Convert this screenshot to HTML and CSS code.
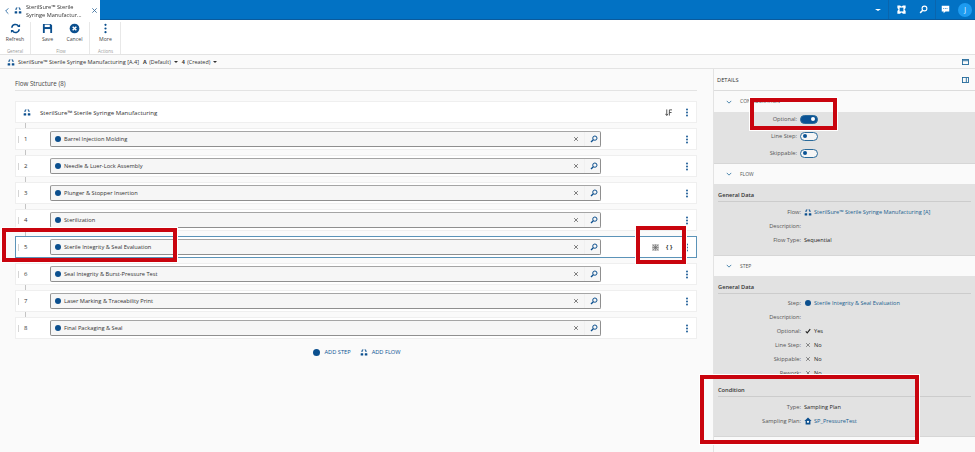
FILE: index.html
```html
<!DOCTYPE html>
<html lang="en">
<head>
<meta charset="utf-8">
<title>Flow</title>
<link rel="stylesheet" href="styles.css">
</head>
<body>
<svg class="defs" width="0" height="0">
  <symbol id="flow" viewBox="0 0 12 10"><path d="M3 4.4V3.2Q3 1 5 1M7 1Q9 1 9 3.2V4.4" fill="none" stroke="currentColor" stroke-width="1.6"/><rect x="1" y="6" width="3.8" height="3.6" rx=".5" fill="currentColor"/><rect x="7.2" y="6" width="3.8" height="3.6" rx=".5" fill="currentColor"/></symbol>
  <symbol id="search" viewBox="0 0 12 12"><circle cx="7.3" cy="4.7" r="3.2" fill="none" stroke="currentColor" stroke-width="1.5"/><path d="M5 7 1.5 10.5" stroke="currentColor" stroke-width="2"/></symbol>
  <symbol id="x" viewBox="0 0 8 8"><path d="M1.5 1.5 6.5 6.5M6.5 1.5 1.5 6.5" stroke="currentColor" stroke-width="1"/></symbol>
  <symbol id="chev" viewBox="0 0 8 5"><path d="M1 1 4 4 7 1" fill="none" stroke="currentColor" stroke-width="1"/></symbol>
  <symbol id="dots" viewBox="0 0 4 12"><circle cx="2" cy="2" r="1.2" fill="currentColor"/><circle cx="2" cy="6" r="1.2" fill="currentColor"/><circle cx="2" cy="10" r="1.2" fill="currentColor"/></symbol>
</svg>

<div class="page">
<header class="topbar">
  <div class="tab">
    <svg class="tab-back" viewBox="0 0 6 10"><path d="M5 1 1 5 5 9" fill="none" stroke="currentColor" stroke-width="1.2"/></svg>
    <svg class="ic-flow tab-flow"><use href="#flow"/></svg>
    <div class="tab-title">SterilSure™ Sterile<br>Syringe Manufactur...</div>
    <svg class="tab-close"><use href="#x"/></svg>
  </div>
  <div class="top-actions">
    <span class="caret white"></span>
    <span class="top-sep"></span>
    <svg class="top-ic t-expand" viewBox="0 0 12 12"><path d="M.5 .5H4L6 2 8 .5H11.5V4L10 6 11.5 8V11.5H8L6 10 4 11.5H.5V8L2 6 .5 4Z" fill="#fff"/><rect x="3.5" y="3.5" width="5" height="5" fill="#0272c4"/></svg>
    <svg class="top-ic t-search" viewBox="0 0 12 12"><use href="#search"/></svg>
    <span class="top-sep"></span>
    <svg class="top-ic t-chat" viewBox="0 0 12 12"><path d="M1 1H11V8.5H6L3.5 11V8.5H1Z" fill="#fff"/><path d="M3 4.7H9" stroke="#0272c4" stroke-dasharray="1.2 1"/></svg>
    <span class="avatar">J</span>
  </div>
</header>

<section class="ribbon">
  <div class="rgroup g1">
    <div class="rbtns"><div class="rbtn"><svg class="r-ic" viewBox="0 0 12 12"><path d="M2 5.2A4 4 0 0 1 9.3 3.4M10 6.8A4 4 0 0 1 2.7 8.6" fill="none" stroke="currentColor" stroke-width="1.7"/><path d="M7.8 4.4H11V1.2ZM4.2 7.6H1V10.8Z" fill="currentColor"/></svg><span>Refresh</span></div></div>
    <div class="rlabel">General</div>
  </div>
  <div class="rgroup g2">
    <div class="rbtns">
      <div class="rbtn"><svg class="r-ic" viewBox="0 0 12 12"><path d="M1 1H9.5L11 2.5V11H1Z" fill="currentColor"/><rect x="3" y="1.8" width="5.5" height="2.6" fill="#fff"/><rect x="3" y="6.6" width="6" height="4.4" fill="#fff"/></svg><span>Save</span></div>
      <div class="rbtn"><svg class="r-ic" viewBox="0 0 12 12"><circle cx="6" cy="6" r="5.3" fill="currentColor"/><path d="M4 4 8 8M8 4 4 8" stroke="#fff" stroke-width="1.6"/></svg><span>Cancel</span></div>
    </div>
    <div class="rlabel">Flow</div>
  </div>
  <div class="rgroup g3">
    <div class="rbtns"><div class="rbtn"><svg class="r-ic" viewBox="0 0 4 12"><use href="#dots"/></svg><span>More</span></div></div>
    <div class="rlabel">Actions</div>
  </div>
</section>

<nav class="crumb">
  <svg class="ic-flow"><use href="#flow"/></svg>
  <span class="crumb-name">SterilSure™ Sterile Syringe Manufacturing [A.4]</span>
  <span class="crumb-item"><b>A</b> (Default)<i class="caret"></i></span>
  <span class="crumb-item"><b>4</b> (Created)<i class="caret"></i></span>
  <svg class="panel-ic crumb-end" viewBox="0 0 8 7"><rect x=".5" y=".5" width="7" height="6" fill="none" stroke="currentColor"/><path d="M1 2H7" stroke="currentColor"/></svg>
</nav>

<main class="main">
  <section class="left">
    <h2 class="left-title">Flow Structure (8)</h2>
    <div class="rows">
      <div class="row head">
        <svg class="ic-flow head-ic"><use href="#flow"/></svg>
        <span class="head-name">SterilSure™ Sterile Syringe Manufacturing</span>
        <svg class="sort" viewBox="0 0 8 8"><path d="M2 .5V7M.5 5.5 2 7.5 3.5 5.5M5 1V7.5M5 1H8M5 4H7.5" fill="none" stroke="#444" stroke-width="1"/></svg>
        <svg class="dots"><use href="#dots"/></svg>
      </div>
      <div class="row"><span class="num">1</span><div class="field"><i class="dot"></i><span class="fname">Barrel Injection Molding</span><svg class="fx"><use href="#x"/></svg><span class="fsep"></span><svg class="fs"><use href="#search"/></svg></div><svg class="dots"><use href="#dots"/></svg></div>
      <div class="row"><span class="num">2</span><div class="field"><i class="dot"></i><span class="fname">Needle &amp; Luer-Lock Assembly</span><svg class="fx"><use href="#x"/></svg><span class="fsep"></span><svg class="fs"><use href="#search"/></svg></div><svg class="dots"><use href="#dots"/></svg></div>
      <div class="row"><span class="num">3</span><div class="field"><i class="dot"></i><span class="fname">Plunger &amp; Stopper Insertion</span><svg class="fx"><use href="#x"/></svg><span class="fsep"></span><svg class="fs"><use href="#search"/></svg></div><svg class="dots"><use href="#dots"/></svg></div>
      <div class="row"><span class="num">4</span><div class="field"><i class="dot"></i><span class="fname">Sterilization</span><svg class="fx"><use href="#x"/></svg><span class="fsep"></span><svg class="fs"><use href="#search"/></svg></div><svg class="dots"><use href="#dots"/></svg></div>
      <div class="row active"><span class="num">5</span><div class="field"><i class="dot"></i><span class="fname">Sterile Integrity &amp; Seal Evaluation</span><svg class="fx"><use href="#x"/></svg><span class="fsep"></span><svg class="fs"><use href="#search"/></svg></div>
        <svg class="cond" viewBox="0 0 7 7"><rect width="7" height="7" fill="#c9c9c9"/><path d="M1 1 6 6M6 1 1 6M3.5 .5V6.5M.5 3.5H6.5" stroke="#666" stroke-width=".6"/></svg><span class="braces">{ }</span><svg class="dots"><use href="#dots"/></svg></div>
      <div class="row"><span class="num">6</span><div class="field"><i class="dot"></i><span class="fname">Seal Integrity &amp; Burst-Pressure Test</span><svg class="fx"><use href="#x"/></svg><span class="fsep"></span><svg class="fs"><use href="#search"/></svg></div><svg class="dots"><use href="#dots"/></svg></div>
      <div class="row"><span class="num">7</span><div class="field"><i class="dot"></i><span class="fname">Laser Marking &amp; Traceability Print</span><svg class="fx"><use href="#x"/></svg><span class="fsep"></span><svg class="fs"><use href="#search"/></svg></div><svg class="dots"><use href="#dots"/></svg></div>
      <div class="row"><span class="num">8</span><div class="field"><i class="dot"></i><span class="fname">Final Packaging &amp; Seal</span><svg class="fx"><use href="#x"/></svg><span class="fsep"></span><svg class="fs"><use href="#search"/></svg></div><svg class="dots"><use href="#dots"/></svg></div>
    </div>
    <div class="adds">
      <span class="add"><i class="dot"></i>ADD STEP</span>
      <span class="add"><svg class="ic-flow"><use href="#flow"/></svg>ADD FLOW</span>
    </div>
  </section>

  <aside class="right">
    <div class="details"><span>DETAILS</span><svg class="panel-ic" viewBox="0 0 8 7"><rect x=".5" y=".5" width="7" height="6" fill="none" stroke="currentColor"/><path d="M5 1V6" stroke="currentColor"/></svg></div>
    <div class="sec-head h-config"><svg class="chev"><use href="#chev"/></svg>CONFIGURATION</div>
    <div class="sec config">
      <div class="kv"><span class="k kt">Optional:</span><span class="toggle on"></span></div>
      <div class="kv"><span class="k kt">Line Step:</span><span class="toggle"></span></div>
      <div class="kv"><span class="k kt">Skippable:</span><span class="toggle"></span></div>
    </div>
    <div class="sec-head"><svg class="chev"><use href="#chev"/></svg>FLOW</div>
    <div class="sec flow">
      <div class="sub">General Data</div>
      <div class="kv"><span class="k">Flow:</span><span class="v link"><svg class="ic-flow"><use href="#flow"/></svg>SterilSure™ Sterile Syringe Manufacturing [A]</span></div>
      <div class="kv"><span class="k">Description:</span></div>
      <div class="kv"><span class="k">Flow Type:</span><span class="v">Sequential</span></div>
    </div>
    <div class="sec-head"><svg class="chev"><use href="#chev"/></svg>STEP</div>
    <div class="sec step">
      <div class="sub">General Data</div>
      <div class="kv"><span class="k">Step:</span><span class="v link"><i class="dot"></i>Sterile Integrity &amp; Seal Evaluation</span></div>
      <div class="kv"><span class="k">Description:</span></div>
      <div class="kv"><span class="k">Optional:</span><span class="v"><svg class="yn" viewBox="0 0 8 8"><path d="M1 4.5 3 6.5 7 1.5" fill="none" stroke="#222" stroke-width="1.5"/></svg>Yes</span></div>
      <div class="kv"><span class="k">Line Step:</span><span class="v"><svg class="yn no"><use href="#x"/></svg>No</span></div>
      <div class="kv"><span class="k">Skippable:</span><span class="v"><svg class="yn no"><use href="#x"/></svg>No</span></div>
      <div class="kv"><span class="k">Rework:</span><span class="v"><svg class="yn no"><use href="#x"/></svg>No</span></div>
      <div class="sub sub2">Condition</div>
      <div class="kv"><span class="k">Type:</span><span class="v">Sampling Plan</span></div>
      <div class="kv"><span class="k">Sampling Plan:</span><span class="v link"><svg class="plan" viewBox="0 0 10 10"><path d="M5 .5 9.5 5H8V9.5H2V5H.5Z" fill="currentColor"/><circle cx="5" cy="6" r="1.4" fill="#fff"/></svg>SP_PressureTest</span></div>
    </div>
  </aside>
</main>
</div>

<div class="redbox rb-opt"></div>
<div class="redbox rb-step"></div>
<div class="redbox rb-cond"></div>
<div class="redbox rb-icons"></div>
</body>
</html>
```
FILE: styles.css
```css
* { box-sizing: border-box; }
html, body { margin: 0; padding: 0; }
body {
  width: 975px; height: 452px; overflow: hidden; position: relative;
  background: #fafafa; color: #333;
  font-family: "Open Sans", sans-serif; font-size: 5.7px; line-height: 9px;
}
.page { filter: blur(.3px); }
.defs { position: absolute; }
svg { display: block; flex: none; }
.topbar { height: 20px; background: #0272c4; border-bottom: 1px solid #0a5a9c; display: flex; justify-content: space-between; }
.tab { width: 100px; height: 21px; background: #fff; display: flex; align-items: center; position: relative; z-index: 1; color: #0b5394; }
.tab-back { width: 4px; height: 8px; margin-left: 5px; }
.ic-flow { width: 8px; height: 7px; color: #0b4f8e; }
.tab-flow { margin-left: 5px; }
.tab-title { margin-left: 4px; width: 65px; color: #333; font-size: 5.6px; line-height: 8px; white-space: nowrap; }
.tab-close { width: 7px; height: 7px; color: #3b6f9d; }
.top-actions { display: flex; align-items: center; color: #fff; padding-right: 3px; }
.caret { display: inline-block; width: 0; height: 0; border: 2px solid transparent; border-top: 2.5px solid #333; border-bottom: 0; margin-left: 3px; vertical-align: 1px; }
.caret.white { border-top-color: #fff; border-left-width: 3px; border-right-width: 3px; margin: 0 7px 0 0; }
.top-sep { width: 1px; height: 19px; background: #0a65ad; }
.top-ic { width: 9px; height: 9px; color: #fff; }
.t-expand { margin: 0 13px 0 8px; }
.t-search { margin-right: 7px; }
.t-chat { margin: 0 8px 0 5px; }
.avatar { width: 14px; height: 14px; border-radius: 50%; background: #1d9bf0; color: #fff; text-align: center; line-height: 14px; font-size: 6.5px; }

.ribbon { height: 35px; background: #fff; border-bottom: 1px solid #e3e3e3; display: flex; padding-top: 1px; }
.rgroup { display: flex; flex-direction: column; align-items: center; border-right: 1px solid #e8e8e8; height: 32px; margin-top: 1px; }
.g1 { width: 31px; }
.g2 { width: 59px; padding-left: 2px; }
.g3 { width: 31px; padding-left: 1px; }
.rbtns { display: flex; flex: 1; }
.rbtn { width: 27px; display: flex; flex-direction: column; align-items: center; color: #0b4f8e; }
.rbtn span { color: #444; font-size: 5.2px; line-height: 7px; margin-top: 1.5px; }
.r-ic { width: 11px; height: 11px; margin-top: 1px; }
.rlabel { font-size: 4.4px; line-height: 6px; color: #999; }

.crumb { height: 14px; background: #fafafa; border-bottom: 1px solid #e3e3e3; display: flex; align-items: center; padding: 1px 0 0 7px; color: #333; font-size: 5.6px; }
.crumb-name { margin-left: 3px; }
.crumb-item { margin-left: 4px; font-size: 5.4px; }
.crumb-item b { font-weight: 700; margin-right: 1px; }
.crumb-end { margin-left: auto; margin-right: 6px; }
.panel-ic { width: 7px; height: 6px; color: #1a6496; }

.main { display: flex; height: 383px; }
.left { width: 713px; padding: 0 16px 0 15px; background: #fafafa; }
.left-title { margin: 0; height: 22px; padding-top: 10px; border-bottom: 1px solid #e3e3e3; font-weight: 400; font-size: 6.2px; line-height: 9px; color: #444; }
.rows { margin-top: 10px; display: flex; flex-direction: column; gap: 5px; }
.row { height: 22px; background: #fff; border: 1px solid #efefef; display: flex; align-items: center; padding-right: 7px; position: relative; }
.row + .row::before { content: ""; position: absolute; left: 9px; top: -6px; width: 1px; height: 5px; background: #c4c4c4; }
.row.active { border-color: #5b93b8; }
.num { width: 34px; padding-left: 8px; color: #333; font-size: 6px; position: relative; }
.num::before { content: ""; position: absolute; left: 2px; top: 1px; width: 1px; height: 7px; background: #d4d4d4; }
.head-ic { margin-left: 7px; }
.head-name { margin-left: 9px; font-size: 6.1px; flex: 1; }
.sort { width: 7px; height: 7px; margin-right: 13px; }
.dots { width: 4px; height: 9px; color: #0b4f8e; margin-left: auto; }
.field { width: 551px; height: 16px; background: #f6f6f6; border: 1px solid #8f8f8f; border-top-color: #a5a5a5; border-radius: 2px; display: flex; align-items: center; padding-left: 4px; }
.dot { display: inline-block; width: 6px; height: 6px; border-radius: 50%; background: #0b4f8e; flex: none; }
.fname { margin-left: 3px; flex: 1; color: #333; white-space: nowrap; font-size: 5.7px; }
.fx { width: 6px; height: 6px; color: #555; }
.fsep { width: 1px; height: 14px; margin-left: 5px; background: #f0f0f0; }
.fs { width: 8px; height: 8px; color: #0b4f8e; margin: 0 2px 0 5px; }
.cond { width: 7px; height: 7px; margin-left: 51px; }
.braces { font-size: 6px; font-weight: 700; color: #333; margin-left: 7px; white-space: nowrap; }
.adds { display: flex; justify-content: center; gap: 9px; margin-top: 9px; padding-left: 2px; color: #0b5394; font-size: 5.7px; }
.add { display: flex; align-items: center; gap: 4px; }
.add .dot { width: 7px; height: 7px; }

.right { width: 262px; background: #fafafa; border-left: 1px solid #e3e3e3; }
.details { height: 22px; padding: 7px 6px 0 3px; display: flex; justify-content: space-between; align-items: flex-start; border-bottom: 1px solid #dcdcdc; font-size: 5.7px; color: #333; }
.details .panel-ic { margin-top: 1px; }
.sec-head { height: 20px; display: flex; align-items: center; padding-left: 12px; color: #555; font-size: 5px; background: #fafafa; }
.h-config { height: 21px; }
.chev { width: 6px; height: 4px; color: #1a6496; margin-right: 8px; }
.sec { background: #e2e2e2; border-bottom: 1px solid #d6d6d6; padding: 0 4px; }
.config { height: 52px; display: flex; flex-direction: column; gap: 3px; }
.flow { height: 72px; }
.step { height: 161px; }
.sub { height: 18px; padding-top: 6.5px; margin-bottom: 3px; border-bottom: 1px solid #ccc; color: #333; font-size: 5.7px; font-weight: 600; }
.step .sub { margin-bottom: 2px; }
.step .sub2 { margin-top: -1px; margin-bottom: 3px; }
.kv { height: 14px; display: flex; align-items: center; }
.k { width: 83px; text-align: right; color: #555; font-size: 5.7px; white-space: nowrap; }
.kt { width: 79px; }
.v { margin-left: 3px; color: #222; display: flex; align-items: center; white-space: nowrap; font-size: 5.6px; }
.v.link { color: #1a5f8f; gap: 2px; }
.v.link .dot { margin: 0 1px; }
.plan { width: 8px; height: 8px; color: #0b4f8e; }
.yn { width: 6px; height: 6px; margin: 0 3px 0 1px; }
.yn.no { color: #666; }
.toggle { width: 18px; height: 9px; border-radius: 5px; margin-left: 3px; border: 1px solid #2a6a9a; background: #f5f5f5; position: relative; }
.toggle::after { content: ""; position: absolute; left: 2px; top: 1.5px; width: 4px; height: 4px; border-radius: 50%; background: #0b5394; }
.toggle.on { background: #0b5394; }
.toggle.on::after { left: auto; right: 2px; background: #fff; }

.redbox { position: absolute; border: 4px solid #c9040e; outline: 1px solid #fff; }
.rb-opt { left: 750px; top: 98px; width: 87px; height: 32px; }
.rb-step { left: 2px; top: 228px; width: 175px; height: 34px; }
.rb-cond { left: 700px; top: 375px; width: 219px; height: 69px; }
.rb-icons { left: 636px; top: 226px; width: 50px; height: 38px; }
```
